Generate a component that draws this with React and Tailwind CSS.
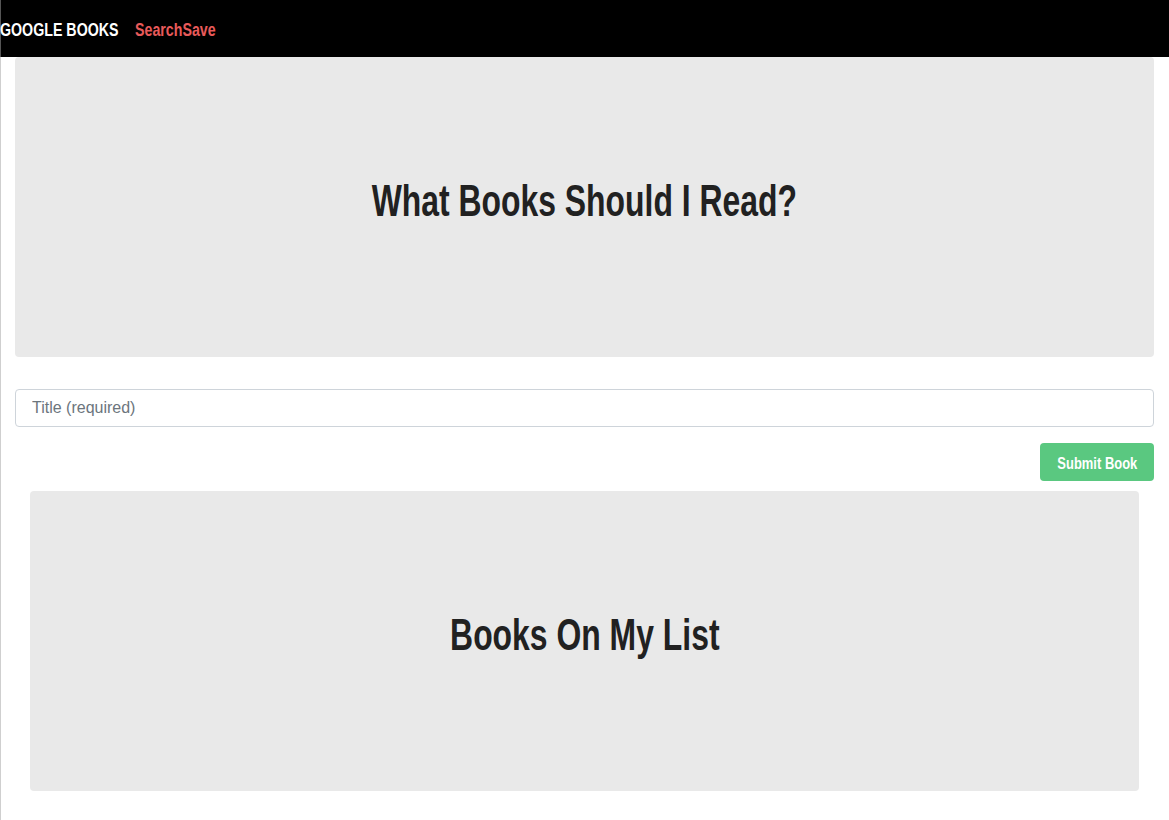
import React, { useState } from "react";

const narrow = { fontFamily: '"Liberation Sans", Arial, sans-serif' };

const Jumbotron = ({ children, className = "" }) => (
  <div className={"bg-[#e9e9e9] rounded-[4px] h-[300px] flex items-center justify-center " + className}>
    {children}
  </div>
);

// condensed look: Liberation Sans bold squeezed horizontally
const Heading = ({ children }) => (
  <h1 className="text-[44px] font-bold text-[#212121] mb-[12px] whitespace-nowrap">
    <span className="inline-block scale-x-[0.725]">{children}</span>
  </h1>
);

export default function App() {
  const [title, setTitle] = useState("");

  return (
    <div className="min-h-[820px] bg-white shadow-[inset_1px_0_0_#cfcfcf]" style={narrow}>
      {/* navbar */}
      <nav className="bg-black h-[57px] pt-[3px] flex items-center font-bold text-[18px] whitespace-nowrap shadow-[inset_1px_0_0_#555]">
        <span className="w-[119px] shrink-0">
          <span className="inline-block origin-left scale-x-[0.79] text-white">GOOGLE BOOKS</span>
        </span>
        <span className="ml-[16px]">
          <span className="inline-block origin-left scale-x-[0.79] text-[#e85a5a]">SearchSave</span>
        </span>
      </nav>

      <div className="px-[15px]">
        <Jumbotron>
          <Heading>What Books Should I Read?</Heading>
        </Jumbotron>

        <form className="mt-[32px]" onSubmit={(e) => e.preventDefault()}>
          <input
            value={title}
            onChange={(e) => setTitle(e.target.value)}
            placeholder="Title (required)"
            className="w-full h-[38px] border border-[#ced4da] rounded-[4px] px-[16px] text-[16px] text-[#495057] placeholder:text-[#6c757d] outline-none"
          />
          <div className="flex justify-end mt-[16px]">
            <button className="bg-[#5ac880] text-white font-bold text-[16px] h-[38px] w-[114px] pt-[3px] rounded-[4px] whitespace-nowrap">
              <span className="inline-block scale-x-[0.81]">Submit Book</span>
            </button>
          </div>
        </form>

        <Jumbotron className="mx-[15px] mt-[10px]">
          <Heading>Books On My List</Heading>
        </Jumbotron>
      </div>
    </div>
  );
}
